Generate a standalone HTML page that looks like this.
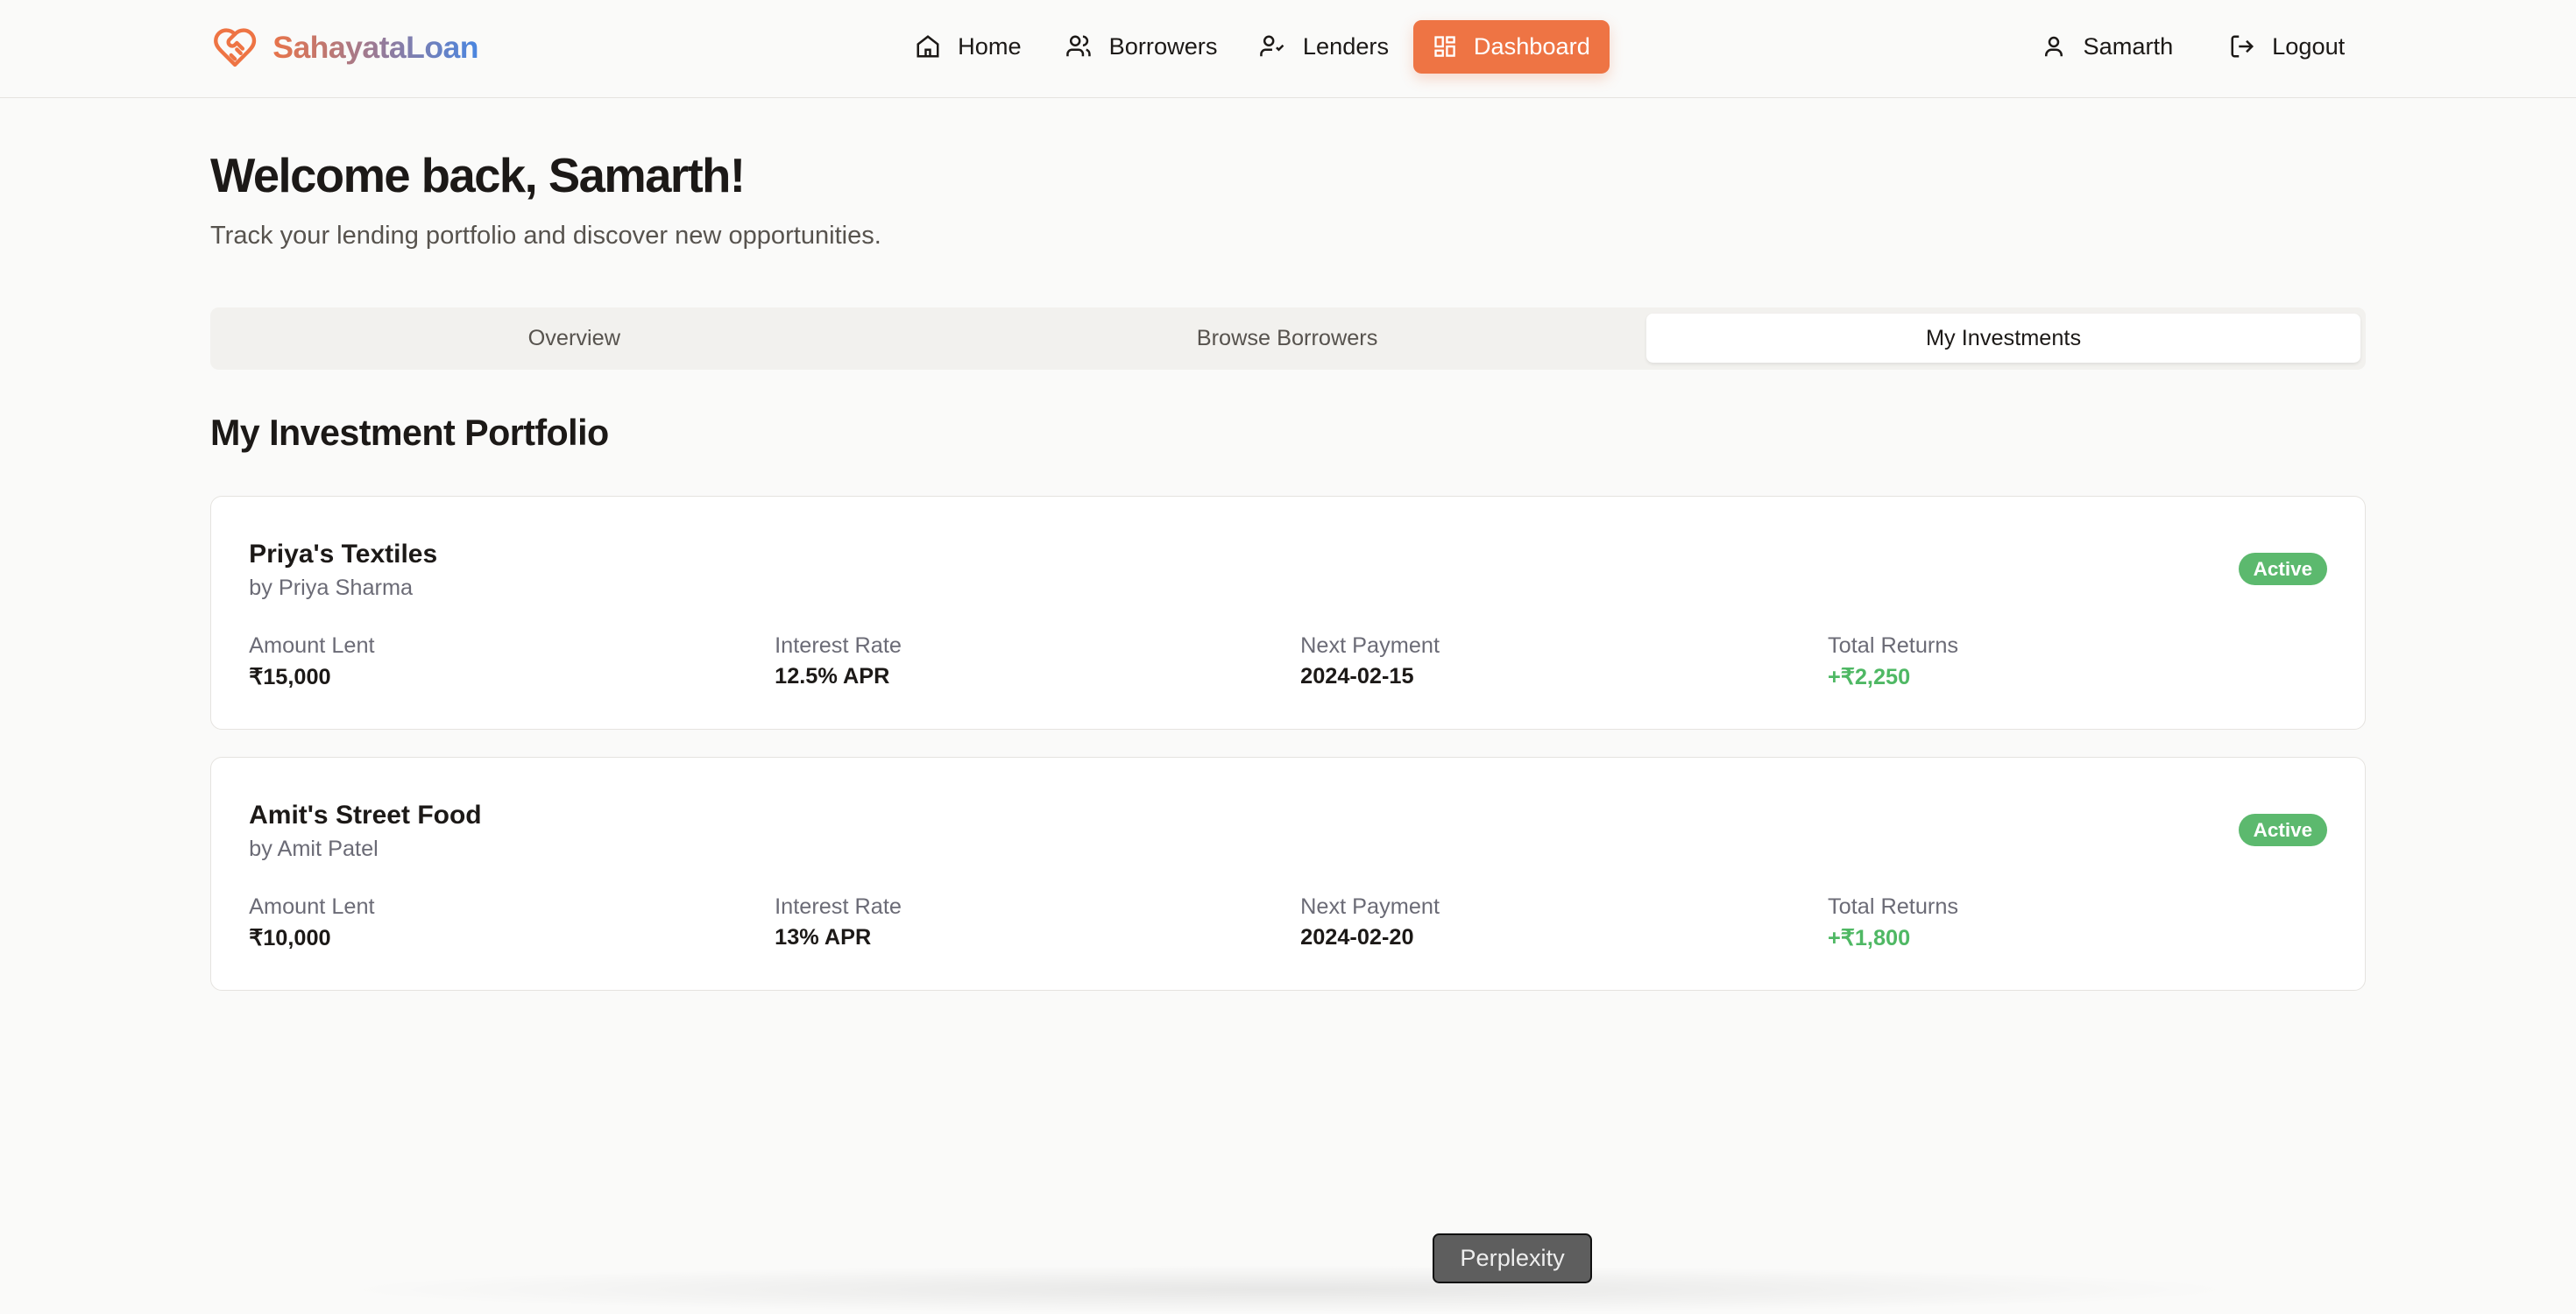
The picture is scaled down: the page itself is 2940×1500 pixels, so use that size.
<!DOCTYPE html>
<html><head><meta charset="utf-8"><style>
html,body{margin:0;padding:0;}
body{width:1568px;height:786px;zoom:1.875;background:#fafaf9;font-family:"Liberation Sans",sans-serif;color:#1c1917;position:relative;overflow:hidden;}
.nav{position:absolute;left:0;top:0;width:1568px;height:59px;border-bottom:1px solid #e5e3df;background:#fafaf9;}
.logo{position:absolute;left:128px;top:15px;display:flex;align-items:center;font-weight:bold;font-size:19px;letter-spacing:-0.3px;}
.logo span{background:linear-gradient(90deg,#e8744a,#9a7a95,#4a86e0);-webkit-background-clip:text;color:transparent;}
.ni{position:absolute;top:12px;height:33px;display:flex;align-items:center;font-size:14.5px;color:#1c1917;}
.ni svg{margin-right:10px}
.dash{background:#ee7444;color:#fff;border-radius:5px;padding:0 12px;box-shadow:0 3px 8px rgba(238,116,68,.25);}
h1{position:absolute;left:128px;top:90px;margin:0;font-size:29px;font-weight:bold;letter-spacing:-0.8px;}
.sub{position:absolute;left:128px;top:135px;font-size:15.5px;color:#57534e;}
.tabs{position:absolute;left:128px;top:187px;width:1312px;height:38px;background:#f2f1ee;border-radius:5px;}
.tab{position:absolute;top:4px;height:30px;line-height:30px;text-align:center;font-size:13.5px;color:#57534e;width:435px;}
.tab.on{background:#fff;color:#1c1917;border-radius:4px;box-shadow:0 1px 2px rgba(0,0,0,.08);}
h2{position:absolute;left:128px;top:251px;margin:0;font-size:22px;font-weight:bold;letter-spacing:-0.3px;}
.card{position:absolute;left:128px;width:1311px;height:141px;background:#fff;border:1px solid #e5e3df;border-radius:7px;}
.t{position:absolute;left:23px;top:26px;font-size:16px;font-weight:bold;}
.by{position:absolute;left:23px;top:48px;font-size:13.5px;color:#6b6b76;}
.badge{position:absolute;right:23px;top:34px;background:#5cb96e;color:#fff;font-size:12px;font-weight:bold;border-radius:10px;padding:3px 9px;}
.c{position:absolute;top:83px;font-size:13.5px;color:#6b6b76;}
.c b{display:block;margin-top:3px;color:#1c1917;font-weight:bold;font-size:13.5px;}
.c b.g{color:#4fb864}
.tip{position:absolute;left:872px;top:751px;width:95px;height:28px;background:#5e5e5e;border:1.5px solid #111;border-radius:4px;color:#eee;font-size:14.5px;text-align:center;line-height:28px;}
.shade{position:absolute;left:200px;top:770px;width:1170px;height:30px;background:radial-gradient(ellipse at center,rgba(0,0,0,.08),rgba(0,0,0,0) 70%);}
</style></head><body>
<div class="nav">
 <div class="logo"><svg width="30" height="28" viewBox="0 0 24 24" fill="none" stroke="#ee7444" stroke-width="2" stroke-linecap="round" stroke-linejoin="round" style="margin-right:8px"><path d="M19 14c1.5-1.5 3-3.2 3-5.5A5.5 5.5 0 0 0 16.5 3c-1.8 0-3 .5-4.5 2-1.5-1.5-2.7-2-4.5-2A5.5 5.5 0 0 0 2 8.5c0 2.3 1.5 4 3 5.5l7 7Z"/><path d="M12 5 9 8a2 2 0 0 0 2.8 2.8l1.2-1.2 3 3M15 15l-2-2M12 18l-2-2"/></svg><span>SahayataLoan</span></div>
 <div class="ni" style="left:557px"><svg width="16" height="16" viewBox="0 0 24 24" fill="none" stroke="#1c1917" stroke-width="2"><path d="M3 10l9-7 9 7v11H3z"/><path d="M10 21v-6h4v6"/></svg>Home</div>
 <div class="ni" style="left:648px"><svg width="17" height="16" viewBox="0 0 24 24" fill="none" stroke="#1c1917" stroke-width="2"><circle cx="9" cy="7" r="4"/><path d="M2 21v-2a4 4 0 0 1 4-4h6a4 4 0 0 1 4 4v2M16 3a4 4 0 0 1 0 8M22 21v-2a4 4 0 0 0-3-4"/></svg>Borrowers</div>
 <div class="ni" style="left:766px"><svg width="17" height="16" viewBox="0 0 24 24" fill="none" stroke="#1c1917" stroke-width="2"><circle cx="9" cy="7" r="4"/><path d="M2 21v-2a4 4 0 0 1 4-4h6M16 13l2 2 4-4"/></svg>Lenders</div>
 <div class="ni dash" style="left:860px"><svg width="15" height="15" viewBox="0 0 24 24" fill="none" stroke="#fff" stroke-width="2"><rect x="3" y="3" width="7" height="9"/><rect x="14" y="3" width="7" height="5"/><rect x="14" y="12" width="7" height="9"/><rect x="3" y="16" width="7" height="5"/></svg>Dashboard</div>
 <div class="ni" style="left:1242px"><svg width="16" height="16" viewBox="0 0 24 24" fill="none" stroke="#1c1917" stroke-width="2"><circle cx="12" cy="8" r="4"/><path d="M5 21v-1a5 5 0 0 1 5-5h4a5 5 0 0 1 5 5v1"/></svg>Samarth</div>
 <div class="ni" style="left:1357px"><svg width="16" height="16" viewBox="0 0 24 24" fill="none" stroke="#1c1917" stroke-width="2"><path d="M9 21H5a2 2 0 0 1-2-2V5a2 2 0 0 1 2-2h4M16 17l5-5-5-5M21 12H9"/></svg>Logout</div>
</div>
<h1>Welcome back, Samarth!</h1>
<div class="sub">Track your lending portfolio and discover new opportunities.</div>
<div class="tabs">
 <div class="tab" style="left:4px">Overview</div>
 <div class="tab" style="left:438px">Browse Borrowers</div>
 <div class="tab on" style="left:874px">My Investments</div>
</div>
<h2>My Investment Portfolio</h2>
<div class="card" style="top:302px">
 <div class="t">Priya's Textiles</div><div class="by">by Priya Sharma</div><div class="badge">Active</div>
 <div class="c" style="left:23px">Amount Lent<b>₹15,000</b></div>
 <div class="c" style="left:343px">Interest Rate<b>12.5% APR</b></div>
 <div class="c" style="left:663px">Next Payment<b>2024-02-15</b></div>
 <div class="c" style="left:984px">Total Returns<b class="g">+₹2,250</b></div>
</div>
<div class="card" style="top:461px">
 <div class="t">Amit's Street Food</div><div class="by">by Amit Patel</div><div class="badge">Active</div>
 <div class="c" style="left:23px">Amount Lent<b>₹10,000</b></div>
 <div class="c" style="left:343px">Interest Rate<b>13% APR</b></div>
 <div class="c" style="left:663px">Next Payment<b>2024-02-20</b></div>
 <div class="c" style="left:984px">Total Returns<b class="g">+₹1,800</b></div>
</div>
<div class="shade"></div>
<div class="tip">Perplexity</div>
</body></html>
